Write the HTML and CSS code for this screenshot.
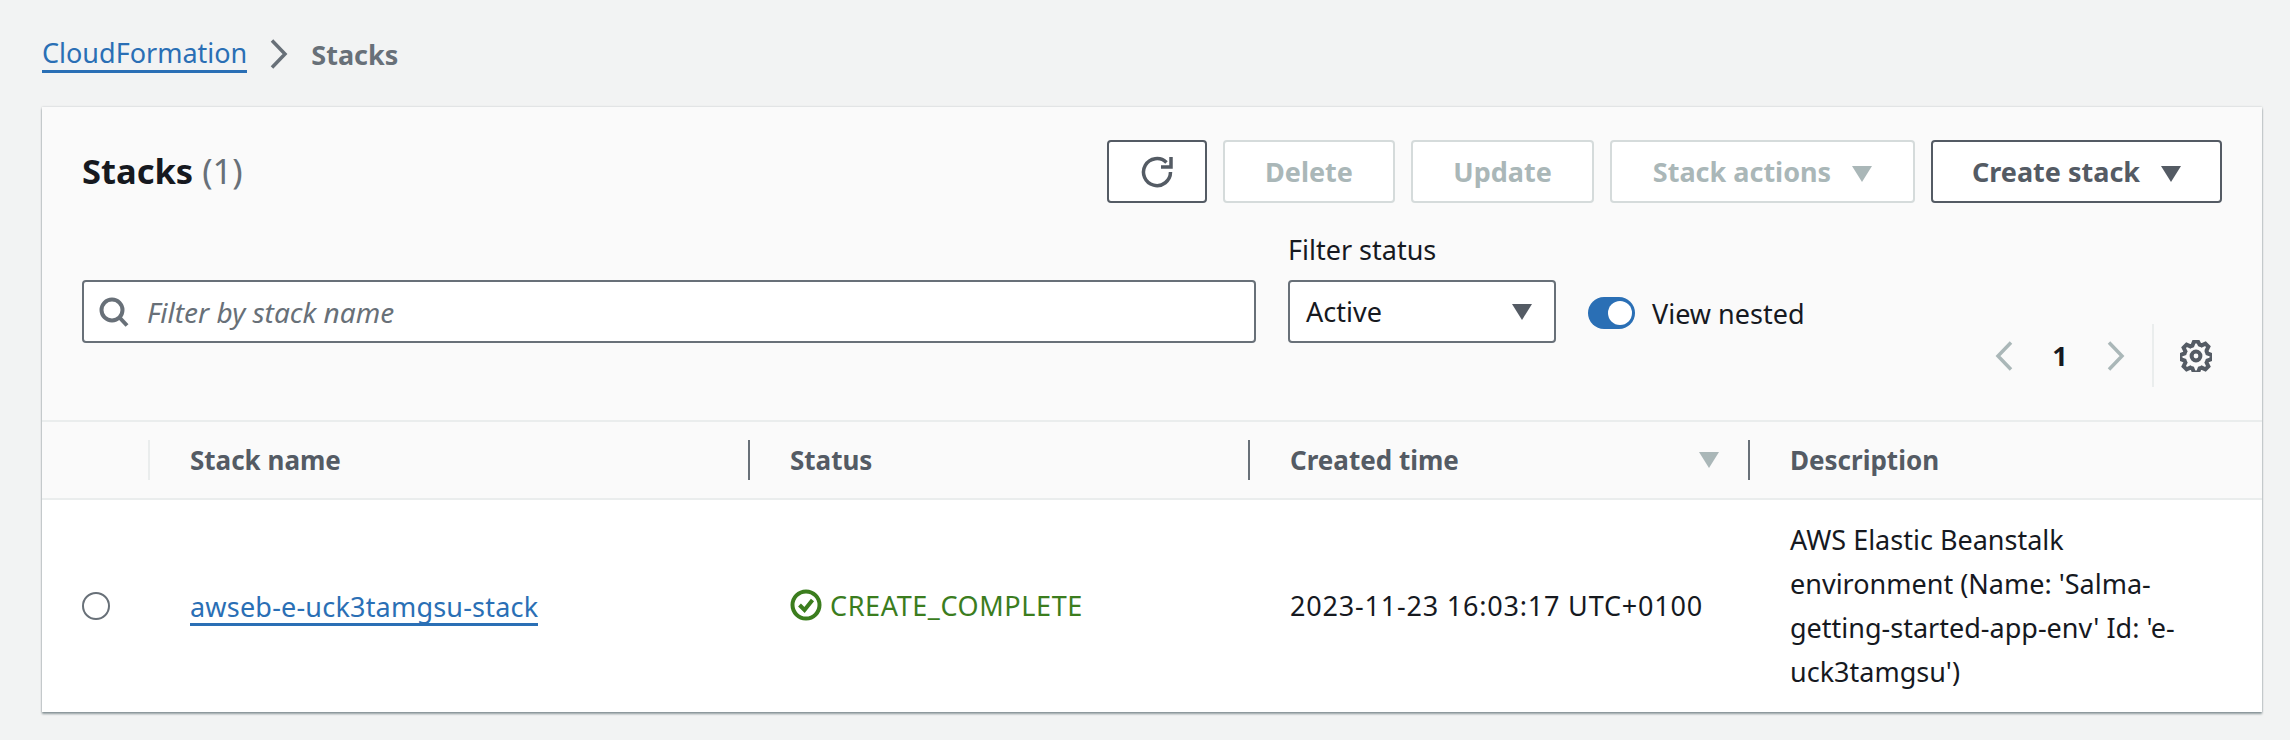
FILE: index.html
```html
<!DOCTYPE html>
<html lang="en">
<head>
    <meta charset="UTF-8">
    <title>Stacks</title>
    <link rel="stylesheet" href="styles.css">
</head>
<body>

    <nav class="breadcrumb">
        <a href="#">CloudFormation</a>
        <svg class="crumb-sep" viewBox="0 0 18 30"><path d="M2 1.500 L15 15 L2 28.500"/></svg>
        <span class="crumb-current">Stacks</span>
    </nav>

    <div class="card">
        <div class="card-header">
            <div class="title-row">
                <h2>Stacks <span class="count">(1)</span></h2>
                <div class="actions">
                    <button class="btn btn-icon">
                        <svg class="icon-refresh" viewBox="0 0 32 32"><path d="M29.500 16 A13.500 13.500 0 1 1 25.500 6.500"/><path d="M30 1 V11 H20"/></svg>
                    </button>
                    <button class="btn btn-delete" disabled>Delete</button>
                    <button class="btn btn-update" disabled>Update</button>
                    <button class="btn btn-stack-actions" disabled>Stack actions <i class="caret"></i></button>
                    <button class="btn btn-create">Create stack <i class="caret"></i></button>
                </div>
            </div>

            <div class="filter-row">
                <div class="filters">
                    <div class="search">
                        <svg class="icon-search" viewBox="0 0 30 30"><circle cx="13" cy="13" r="10.500"/><path d="M20.500 20.500 L28 28.500"/></svg>
                        <span class="placeholder">Filter by stack name</span>
                    </div>
                    <div class="status-filter">
                        <label>Filter status</label>
                        <div class="select">Active <i class="caret"></i></div>
                    </div>
                    <div class="nested">
                        <span class="toggle"><span class="knob"></span></span>
                        <span>View nested</span>
                    </div>
                </div>
                <div class="pager">
                    <svg class="pager-arrow" viewBox="0 0 18 30"><path d="M16 1.500 L3 15 L16 28.500"/></svg>
                    <span class="page-num">1</span>
                    <svg class="pager-arrow" viewBox="0 0 18 30"><path d="M2 1.500 L15 15 L2 28.500"/></svg>
                    <span class="pager-divider"></span>
                    <svg class="icon-gear" viewBox="0 0 16 16"><path d="M13.300 5.200l.9-1.900-1.500-1.500-1.900.9c-.3-.2-.7-.3-1-.4L9 .8H7l-.8 2c-.3.1-.7.2-1 .4l-1.900-.9-1.500 1.500.9 1.900c-.2.3-.3.7-.4 1l-2 .8v2l2 .8c.1.3.2.7.4 1l-.9 1.900 1.500 1.500 1.900-.9c.3.2.7.3 1 .4l.8 2h2l.8-2c.3-.1.7-.2 1-.4l1.900.9 1.500-1.500-.9-1.900c.2-.3.3-.7.4-1l2-.8v-2l-2-.8c-.1-.3-.2-.7-.4-1z"/><circle cx="8" cy="8" r="2.200"/></svg>
                </div>
            </div>
        </div>

        <div class="table-head">
            <div class="th th-select"></div>
            <div class="th th-light"><span>Stack name</span></div>
            <div class="th"><span>Status</span></div>
            <div class="th th-sorted"><span>Created time</span><i class="caret caret-sort"></i></div>
            <div class="th"><span>Description</span></div>
        </div>

        <div class="table-row">
            <div class="cell cell-select"><span class="radio"></span></div>
            <div class="cell"><a class="stack-link" href="#">awseb-e-uck3tamgsu-stack</a></div>
            <div class="cell status-ok">
                <svg class="icon-check" viewBox="0 0 32 32"><circle cx="16" cy="16" r="13.500"/><path d="M9.500 16 L14.500 21 L22.500 11"/></svg>
                <span class="status-text">CREATE_COMPLETE</span>
            </div>
            <div class="cell cell-date">2023-11-23 16:03:17 UTC+0100</div>
            <div class="cell cell-desc">AWS Elastic Beanstalk environment (Name: 'Salma-getting-started-app-env' Id: 'e-uck3tamgsu')</div>
        </div>
    </div>

</body>
</html>
```

FILE: styles.css
```css
* {
    margin: 0;
    padding: 0;
    box-sizing: border-box;
}

body {
    font-family: "Noto Sans", Arial, sans-serif;
    font-size: 27px;
    color: #16191f;
    background-color: #f2f3f3;
    padding: 36px 28px 0 42px;
    height: 740px;
    overflow: hidden;
}

a {
    display: inline-block;
    color: #2a6fb5;
    line-height: 34px;
    text-decoration: none;
    border-bottom: 3px solid #2a6fb5;
}

.breadcrumb {
    display: flex;
    align-items: center;
    gap: 23px;
    height: 36px;
    margin-bottom: 35px;
}

.breadcrumb a {
    margin-top: 1px;
}

.crumb-sep {
    width: 18px;
    height: 30px;
}

.crumb-sep path,
.pager-arrow path {
    fill: none;
    stroke: #687078;
    stroke-width: 3.500;
}

.crumb-current {
    color: #687078;
    font-weight: 700;
}

.card {
    background-color: #fff;
    box-shadow: 0 2px 2px rgba(0, 28, 36, 0.4), 0 0 2px rgba(0, 28, 36, 0.2);
}

.card-header {
    background-color: #fafafa;
    padding: 33px 40px;
    border-bottom: 2px solid #eaeded;
}

.title-row {
    display: flex;
    justify-content: space-between;
    align-items: center;
    height: 63px;
}

h2 {
    font-size: 34.500px;
    font-weight: 700;
    margin-bottom: 2px;
}

.count {
    color: #687078;
    font-weight: 400;
}

.actions {
    display: flex;
    gap: 16px;
}

.btn {
    height: 63px;
    background-color: #fff;
    border: 2px solid #545b64;
    border-radius: 4px;
    font-family: inherit;
    font-size: 27px;
    font-weight: 700;
    color: #545b64;
}

.btn:disabled {
    border-color: #d5dbdb;
    color: #aab7b8;
}

.btn-icon { width: 100px; }
.btn-delete { width: 172px; }
.btn-update { width: 183px; }
.btn-stack-actions { width: 305px; }
.btn-create { width: 291px; }
.btn-icon svg { display: block; margin: 0 auto; }

.caret {
    display: inline-block;
    width: 0;
    height: 0;
    margin-left: 14px;
    border-left: 10px solid transparent;
    border-right: 10px solid transparent;
    border-top: 16px solid #545b64;
}

.btn:disabled .caret {
    border-top-color: #aab7b8;
}

.icon-refresh {
    width: 32px;
    height: 32px;
}

.icon-refresh path {
    fill: none;
    stroke: #545b64;
    stroke-width: 3.500;
}

.filter-row {
    display: flex;
    justify-content: space-between;
    align-items: flex-end;
    margin-top: 30px;
}

.filters {
    display: flex;
    align-items: flex-end;
    gap: 32px;
    padding-bottom: 44px;
}

.search {
    display: flex;
    align-items: center;
    gap: 18px;
    width: 1174px;
    height: 63px;
    padding-left: 15px;
    background-color: #fff;
    border: 2px solid #687078;
    border-radius: 4px;
}

.icon-search {
    width: 30px;
    height: 30px;
}

.icon-search circle,
.icon-search path {
    fill: none;
    stroke: #687078;
    stroke-width: 4;
}

.placeholder {
    color: #687078;
    font-style: italic;
    font-size: 28px;
}

.status-filter label {
    display: block;
    margin-bottom: 14px;
    line-height: 33px;
}

.select {
    display: flex;
    align-items: center;
    justify-content: space-between;
    width: 268px;
    height: 63px;
    padding: 0 22px 0 16px;
    background-color: #fff;
    border: 2px solid #687078;
    border-radius: 4px;
}

.nested {
    display: flex;
    align-items: center;
    gap: 17px;
    height: 32px;
    margin-bottom: 14px;
}

.toggle {
    display: block;
    width: 47px;
    height: 32px;
    padding: 4px 3px 4px 20px;
    background-color: #2a6fb5;
    border-radius: 16px;
}

.knob {
    display: block;
    width: 24px;
    height: 24px;
    background-color: #fff;
    border-radius: 50%;
}

.pager {
    display: flex;
    align-items: center;
    height: 63px;
}

.pager-arrow {
    width: 18px;
    height: 30px;
}

.pager-arrow path {
    stroke: #aab7b8;
}

.page-num {
    width: 94px;
    text-align: center;
    font-weight: 700;
}

.pager-divider {
    width: 2px;
    height: 63px;
    margin: 0 26px 0 27px;
    background-color: #eaeded;
}

.icon-gear {
    width: 32px;
    height: 32px;
    margin-right: 10px;
}

.icon-gear path,
.icon-gear circle {
    fill: none;
    stroke: #545b64;
    stroke-width: 2;
}

.table-head,
.table-row {
    display: grid;
    grid-template-columns: 106px 600px 500px 500px 514px;
}

.table-head {
    height: 78px;
    align-items: center;
    background-color: #fafafa;
    border-bottom: 2px solid #eaeded;
}

.th {
    display: flex;
    align-items: center;
    justify-content: space-between;
    height: 40px;
    padding-left: 40px;
    border-left: 2px solid #687078;
    color: #545b64;
    font-weight: 700;
    font-size: 26px;
}

.th-select {
    border-left: 0;
}

.th-light {
    border-left-color: #eaeded;
}

.th-sorted {
    padding-right: 29px;
}

.caret-sort {
    border-top-color: #aab7b8;
}

.table-row {
    height: 212px;
    align-items: center;
}

.cell {
    padding-left: 42px;
}

.cell-select {
    padding-left: 40px;
    display: flex;
}

.stack-link {
    line-height: 32px;
    letter-spacing: 0.200px;
    margin-bottom: -5px;
}

.radio {
    width: 28px;
    height: 28px;
    border: 2px solid #687078;
    border-radius: 50%;
}

.status-ok {
    display: flex;
    align-items: center;
    gap: 8px;
    color: #3b7d1e;
    margin-bottom: 2px;
}

.status-text {
    letter-spacing: 0.600px;
}

.cell-date {
    letter-spacing: 0.800px;
    margin-bottom: 2px;
}

.icon-check {
    width: 32px;
    height: 32px;
}

.icon-check circle,
.icon-check path {
    fill: none;
    stroke: #3b7d1e;
    stroke-width: 4;
}

.cell-desc {
    padding-right: 40px;
    line-height: 44px;
}
```
